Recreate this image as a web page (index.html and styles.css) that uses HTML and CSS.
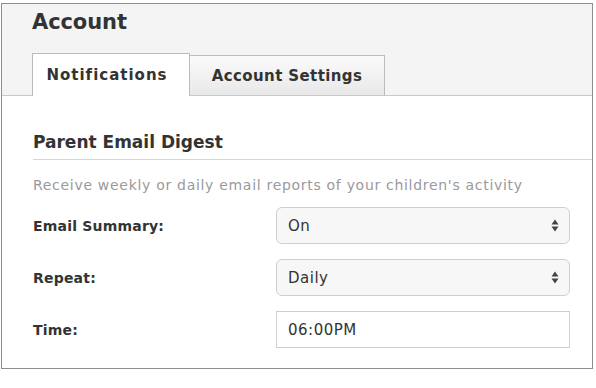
FILE: index.html
```html
<!DOCTYPE html>
<html lang="en">
<head>
    <meta charset="UTF-8">
    <title>Account</title>
    <link rel="stylesheet" href="styles.css">
</head>
<body>
    <div class="panel">
        <div class="panel-header">
            <h1>Account</h1>
            <div class="tabs">
                <a class="tab active" href="#notifications">Notifications</a>
                <a class="tab" href="#settings">Account Settings</a>
            </div>
        </div>

        <div class="panel-body">
            <h2>Parent Email Digest</h2>
            <p class="hint">Receive weekly or daily email reports of your children's activity</p>

            <div class="form-row">
                <label for="summary">Email Summary:</label>
                <div class="select-wrap">
                    <select id="summary">
                        <option>On</option>
                        <option>Off</option>
                    </select>
                    <svg class="arrows" width="8" height="13" viewBox="0 0 8 13"><path d="M4 0.5 L7.5 5.5 L0.5 5.5 Z M4 12.5 L7.5 7.5 L0.5 7.5 Z" fill="#444"/></svg>
                </div>
            </div>

            <div class="form-row">
                <label for="repeat">Repeat:</label>
                <div class="select-wrap">
                    <select id="repeat">
                        <option>Daily</option>
                        <option>Weekly</option>
                    </select>
                    <svg class="arrows" width="8" height="13" viewBox="0 0 8 13"><path d="M4 0.5 L7.5 5.5 L0.5 5.5 Z M4 12.5 L7.5 7.5 L0.5 7.5 Z" fill="#444"/></svg>
                </div>
            </div>

            <div class="form-row">
                <label for="time">Time:</label>
                <input id="time" type="text" value="06:00PM">
            </div>
        </div>
    </div>
</body>
</html>
```

FILE: styles.css
```css
* {
    margin: 0;
    padding: 0;
    box-sizing: border-box;
}

body {
    font-family: "DejaVu Sans", Verdana, sans-serif;
    color: #333;
    background: #fff;
    padding: 3px 0 0 1px;
}

.panel {
    width: 592px;
    height: 366px;
    border: 1px solid #8e8e8e;
    background: #fff;
}

/* header with title and tabs */
.panel-header {
    background: #f4f4f4;
    border-bottom: 1px solid #c9c9c9;
    padding: 0 0 0 30px;
    height: 92px;
    display: flex;
    flex-direction: column;
    justify-content: space-between;
}

.panel-header h1 {
    font-size: 21px;
    font-weight: bold;
    color: #333;
    padding-top: 6px;
    letter-spacing: -0.1px;
}

.tabs {
    display: flex;
    align-items: flex-end;
    margin-bottom: -1px;
}

.tab {
    display: flex;
    align-items: center;
    justify-content: center;
    font-size: 15px;
    font-weight: bold;
    color: #333;
    text-decoration: none;
    border: 1px solid #bcbcbc;
    border-bottom: none;
    letter-spacing: 0.4px;
}

.tab.active {
    width: 158px;
    height: 43px;
    background: #fff;
    padding-right: 8px;
    letter-spacing: 1px;
}

.tab:not(.active) {
    width: 196px;
    height: 41px;
    margin-left: -1px;
    border-bottom: 1px solid #c9c9c9;
    background: linear-gradient(#fbfbfb, #e8e8e8);
}

/* body */
.panel-body {
    padding: 36px 22px 0 31px;
}

.panel-body h2 {
    font-size: 17px;
    font-weight: bold;
    color: #333;
    padding-bottom: 7px;
    border-bottom: 1px solid #d6d6d6;
    margin-right: -22px;
}

.hint {
    font-size: 14px;
    letter-spacing: 0.7px;
    color: #9a9a9a;
    margin-top: 17px;
    margin-bottom: 14px;
}

.form-row {
    display: grid;
    grid-template-columns: 243px 1fr;
    align-items: center;
    margin-bottom: 15px;
}

.form-row label {
    font-size: 14px;
    letter-spacing: 0.2px;
    font-weight: bold;
    color: #333;
}

.select-wrap {
    position: relative;
}

.select-wrap select {
    appearance: none;
    -webkit-appearance: none;
    width: 100%;
    height: 37px;
    padding: 0 11px;
    font-family: inherit;
    font-size: 15px;
    letter-spacing: 0.5px;
    color: #333;
    background: #f7f7f7;
    border: 1px solid #cfcfcf;
    border-radius: 6px;
}

.select-wrap .arrows {
    position: absolute;
    right: 11px;
    top: 12px;
}

.form-row input {
    width: 100%;
    height: 37px;
    padding: 0 11px;
    font-family: inherit;
    font-size: 15px;
    letter-spacing: 0.5px;
    color: #333;
    border: 1px solid #cfcfcf;
    background: #fff;
}
```
